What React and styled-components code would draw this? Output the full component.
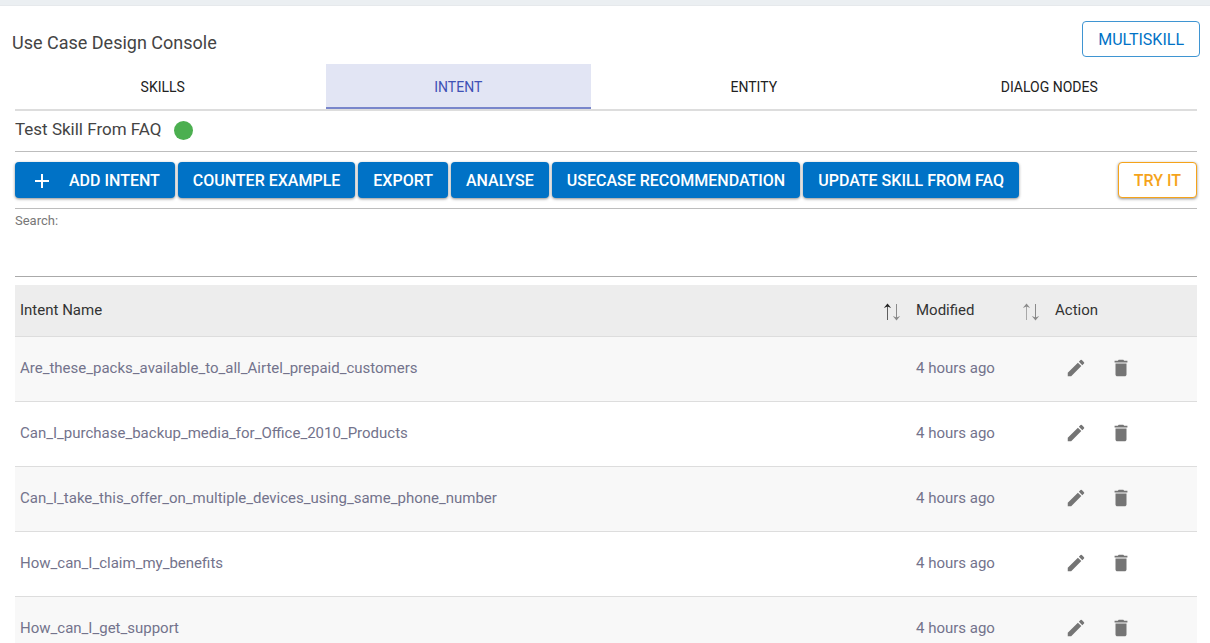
import React, { useState } from 'react'

import styled, { createGlobalStyle } from 'styled-components'

import { MdAdd, MdDelete, MdEdit } from 'react-icons/md'

const tabs = ['Skills', 'Intent', 'Entity', 'Dialog Nodes']

const actions = ['Counter Example', 'Export', 'Analyse', 'Usecase Recommendation', 'Update Skill From FAQ']

const intents = [
    { name: 'Are_these_packs_available_to_all_Airtel_prepaid_customers', modified: '4 hours ago' },
    { name: 'Can_I_purchase_backup_media_for_Office_2010_Products', modified: '4 hours ago' },
    { name: 'Can_I_take_this_offer_on_multiple_devices_using_same_phone_number', modified: '4 hours ago' },
    { name: 'How_can_I_claim_my_benefits', modified: '4 hours ago' },
    { name: 'How_can_I_get_support', modified: '4 hours ago' },
]

function SortArrows({ label, active }) {
    const upColor = active ? '#222' : '#8a8a8a'

    return (
        <SortButton type="button" aria-label={label}>
            <svg width="18" height="18" viewBox="0 0 18 18" fill="none">
                <path d="M4.5 2V17" stroke={upColor} strokeOpacity="0.7"/>
                <path d="M4.5 0.5L8.2 5L4.5 3.6L0.8 5Z" fill={upColor}/>
                <path d="M13.5 1V16" stroke="#8a8a8a"/>
                <path d="M13.5 17.5L17.2 13L13.5 14.4L9.8 13Z" fill="#8a8a8a"/>
            </svg>
        </SortButton>
    )
}

export default function App() {
    const [activeTab, setActiveTab] = useState('Intent')
    const [search, setSearch] = useState('')

    const visible = intents.filter(intent => intent.name.toLowerCase().includes(search.toLowerCase()))

    return (
        <Page>
            <GlobalStyle/>
            <Header>
                <Title>Use Case Design Console</Title>
                <OutlineButton type="button">Multiskill</OutlineButton>
            </Header>
            <Content>
                <TabBar role="tablist">
                    {tabs.map(tab => (
                        <Tab
                            key={tab}
                            type="button"
                            role="tab"
                            aria-selected={tab === activeTab}
                            $active={tab === activeTab}
                            onClick={() => setActiveTab(tab)}
                        >
                            {tab}
                        </Tab>
                    ))}
                </TabBar>
                <SkillRow>
                    <SkillName>Test Skill From FAQ</SkillName>
                    <StatusDot/>
                </SkillRow>
                <Toolbar>
                    <FilledButton type="button"><MdAdd size={24}/>Add Intent</FilledButton>
                    {actions.map(action => (
                        <FilledButton key={action} type="button">{action}</FilledButton>
                    ))}
                    <TryButton type="button">Try It</TryButton>
                </Toolbar>
                <SearchField>
                    <label htmlFor="search">Search:</label>
                    <input id="search" type="text" value={search} onChange={e => setSearch(e.target.value)}/>
                </SearchField>
                <Table>
                    <thead>
                        <tr>
                            <NameHead>
                                <HeadCell>Intent Name<SortArrows label="Sort by intent name" active/></HeadCell>
                            </NameHead>
                            <ModifiedHead>
                                <HeadCell>Modified<SortArrows label="Sort by modified"/></HeadCell>
                            </ModifiedHead>
                            <ActionHead>Action</ActionHead>
                        </tr>
                    </thead>
                    <tbody>
                        {visible.map(intent => (
                            <Row key={intent.name}>
                                <td>{intent.name}</td>
                                <td>{intent.modified}</td>
                                <td>
                                    <RowActions>
                                        <IconButton type="button" aria-label="Edit"><MdEdit size={22}/></IconButton>
                                        <IconButton type="button" aria-label="Delete"><MdDelete size={22}/></IconButton>
                                    </RowActions>
                                </td>
                            </Row>
                        ))}
                    </tbody>
                </Table>
            </Content>
        </Page>
    )
}

const GlobalStyle = createGlobalStyle`
    * {
        box-sizing: border-box;
    }

    html, body, #root {
        height: 100%;
    }

    body {
        margin: 0;
        overflow: hidden;
        background: #fff;
        color: #444;
        font-family: Roboto, "Liberation Sans", sans-serif;
    }

    button, input {
        font-family: inherit;
    }
`

const Page = styled.div`
    height: 100%;
    overflow: hidden;
    border-top: 5px solid #ebeff2;
    box-shadow: inset 0 1px 0 #e6e9ec;
`

const Header = styled.header`
    display: flex;
    justify-content: space-between;
    align-items: center;
    padding: 16px 10px 7px 12px;
`

const Title = styled.h1`
    margin: 0;
    padding-top: 8px;
    font-size: 18px;
    font-weight: 400;
    line-height: 24px;
`

const Button = styled.button`
    height: 36px;
    padding: 2px 15px 0;
    border: 1px solid transparent;
    border-radius: 4px;
    font-size: 16px;
    font-weight: 500;
    line-height: 24px;
    text-transform: uppercase;
    white-space: nowrap;
    cursor: pointer;
`

const OutlineButton = styled(Button)`
    border-color: #3f95d2;
    background: #fff;
    color: #0072c6;
    font-weight: 400;
`

const FilledButton = styled(Button)`
    display: flex;
    align-items: center;
    gap: 15px;
    background: #0072c6;
    border: none;
    box-shadow: 0 1px 3px rgba(0, 0, 0, 0.45);
    color: #fff;
`

const TryButton = styled(Button)`
    margin-left: auto;
    border-color: #f5a31a;
    background: #fff;
    box-shadow: 0 1px 3px rgba(0, 0, 0, 0.45);
    color: #f5a31a;
`

const Content = styled.main`
    padding: 0 13px 0 15px;
`

const TabBar = styled.div`
    display: grid;
    grid-template-columns: repeat(4, 1fr);
    border-bottom: 2px solid #ddd;
`

const Tab = styled.button`
    height: 45px;
    margin: 0 15px;
    padding: 2px 0 0;
    border: none;
    border-bottom: 2px solid ${props => props.$active ? '#7986cb' : 'transparent'};
    background: ${props => props.$active ? '#e2e5f4' : 'none'};
    color: ${props => props.$active ? '#3f51b5' : '#222'};
    font-size: 14px;
    text-transform: uppercase;
    cursor: pointer;
`

const SkillRow = styled.div`
    display: flex;
    align-items: center;
    gap: 12px;
    height: 41px;
    padding: 0 0 2px;
    border-bottom: 1px solid #bdbdbd;
`

const SkillName = styled.h2`
    margin: 0;
    padding-bottom: 2px;
    font-size: 17px;
    font-weight: 400;
    line-height: 24px;
`

const StatusDot = styled.span`
    width: 19px;
    height: 19px;
    border-radius: 50%;
    background: #4caf50;
`

const Toolbar = styled.div`
    display: flex;
    gap: 3px;
    padding: 10px 0;
    border-bottom: 1px solid #bdbdbd;
`

const SearchField = styled.div`
    display: flex;
    flex-direction: column;
    height: 68px;
    margin-bottom: 8px;
    border-bottom: 1px solid #aaa;

    label {
        padding-top: 4px;
        font-size: 13px;
        line-height: 16px;
        color: #777;
    }

    input {
        flex-grow: 1;
        padding: 0;
        border: none;
        outline: none;
        background: none;
        font-size: 16px;
    }
`

const Table = styled.table`
    width: 100%;
    border-collapse: collapse;
    table-layout: fixed;
    font-size: 15px;

    th, td {
        padding: 0 5px;
        border-bottom: 1px solid #ddd;
        text-align: left;
    }

    th {
        height: 51px;
        background: #ededed;
        color: #333;
        font-weight: 400;
    }

    td {
        height: 65px;
        padding-bottom: 2px;
        color: #73738c;
    }
`

const NameHead = styled.th`
    width: auto;
`

const ModifiedHead = styled.th`
    width: 139px;
`

const ActionHead = styled.th`
    width: 147px;
`

const HeadCell = styled.div`
    display: flex;
    justify-content: space-between;
    align-items: center;
`

const SortButton = styled.button`
    display: flex;
    margin-right: 5px;
    padding: 4px 0 0;
    border: none;
    background: none;
    cursor: pointer;
`

const Row = styled.tr`
    background: #fff;

    &:nth-child(odd) {
        background: #f8f8f8;
    }
`

const RowActions = styled.div`
    display: flex;
    gap: 23px;
    padding-left: 10px;
`

const IconButton = styled.button`
    display: flex;
    padding: 0;
    border: none;
    background: none;
    color: #757575;
    cursor: pointer;
`
